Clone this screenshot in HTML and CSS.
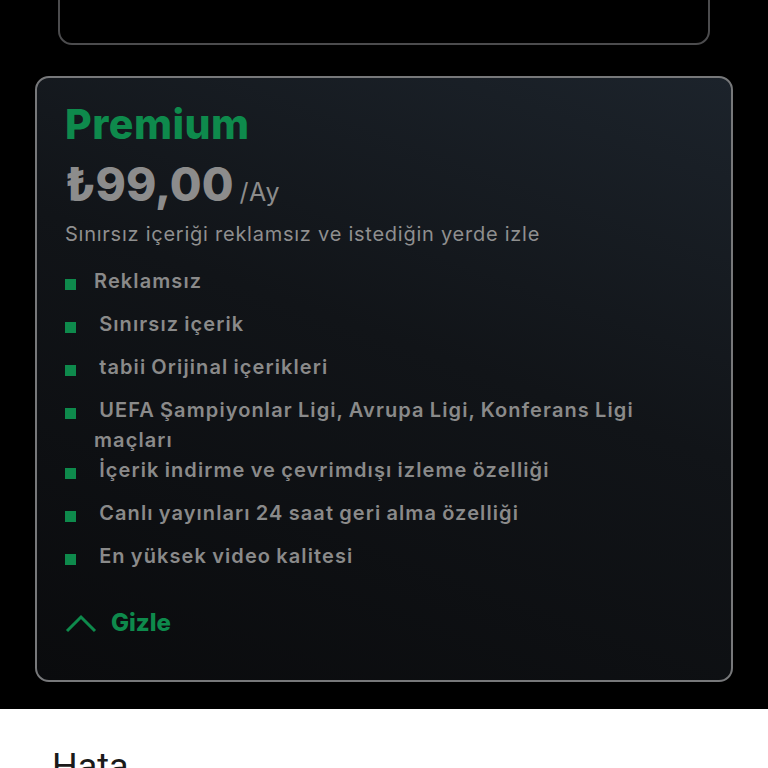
FILE: index.html
```html
<!doctype html>
<html>

<head>
    <link rel="stylesheet" href="styles.css">
</head>

<body>
    <div class="dark">
        <div class="plan plan-prev"></div>
        <div class="plan plan-premium">
            <h2 class="plan-name">Premium</h2>
            <div class="price">
                <span class="amount">₺99,00</span>
                <span class="period">/Ay</span>
            </div>
            <p class="desc">Sınırsız içeriği reklamsız ve istediğin yerde izle</p>
            <ul class="features">
                <li><span class="dot"></span><span>Reklamsız</span></li>
                <li><span class="dot"></span><span>&nbsp;Sınırsız içerik</span></li>
                <li><span class="dot"></span><span>&nbsp;tabii Orijinal içerikleri</span></li>
                <li><span class="dot"></span><span>&nbsp;UEFA Şampiyonlar Ligi, Avrupa Ligi, Konferans Ligi maçları</span></li>
                <li><span class="dot"></span><span>&nbsp;İçerik indirme ve çevrimdışı izleme özelliği</span></li>
                <li><span class="dot"></span><span>&nbsp;Canlı yayınları 24 saat geri alma özelliği</span></li>
                <li><span class="dot"></span><span>&nbsp;En yüksek video kalitesi</span></li>
            </ul>
            <div class="toggle">
                <svg width="32" height="20" viewBox="0 0 32 20">
                    <polyline points="2,18 16,4 30,18" fill="none" stroke="#0e8a4c" stroke-width="3" />
                </svg>
                <span>Gizle</span>
            </div>
        </div>
    </div>
    <div class="light">
        <h3>Hata</h3>
    </div>
</body>

</html>
```

FILE: styles.css
```css
body,
html {
    margin: 0;
    padding: 0;
    background: #fff;
    font-family: Inter, "Noto Sans", sans-serif;
}

.dark {
    background: #000;
    padding: 0 35px 27px;
    overflow: hidden;
}

.plan {
    border-radius: 14px;
    box-sizing: border-box;
}

.plan-prev {
    margin: -60px 23px 31px;
    height: 105px;
    border: 2px solid #4c4c4e;
}

.plan-premium {
    border: 2px solid #77787a;
    background: linear-gradient(200deg, #1c232b 0%, #111418 45%, #0a0b0d 100%);
    padding: 18px 28px 43px 28px;
}

.plan-name {
    margin: 0;
    color: #0e8a4c;
    font-size: 41px;
    font-weight: 800;
    line-height: 56px;
    letter-spacing: 0.5px;
}

.price {
    display: flex;
    align-items: baseline;
    gap: 6px;
    margin-top: 2px;
    color: #8c8c8c;
    line-height: 60px;
}

.amount {
    font-size: 46px;
    font-weight: 800;
}

.period {
    font-size: 25px;
    letter-spacing: 1px;
}

.desc {
    margin: -1px 0 19px;
    color: #8f8f8f;
    font-size: 20px;
    line-height: 26px;
    letter-spacing: 0.75px;
}

.features {
    list-style: none;
    margin: 0;
    padding: 0 20px 0 0;
}

.features li {
    display: flex;
    align-items: flex-start;
    color: #8a8a8a;
    font-size: 20px;
    font-weight: 600;
    line-height: 30px;
    letter-spacing: 1.1px;
    word-spacing: -1px;
    margin-bottom: 13px;
}

.features li:nth-child(4) {
    margin-bottom: 0;
}

.dot {
    flex: none;
    width: 11px;
    height: 11px;
    background: #0e8a4c;
    margin: 13px 18px 0 0;
}

.toggle {
    display: flex;
    align-items: center;
    gap: 14px;
    margin-top: 37px;
    color: #0e8a4c;
    font-size: 24px;
    font-weight: 800;
}

.light {
    padding: 37px 52px 0;
}

.light h3 {
    margin: 0;
    font-family: Roboto, sans-serif;
    font-weight: 400;
    font-size: 36px;
    color: #1a1a1a;
}
```
